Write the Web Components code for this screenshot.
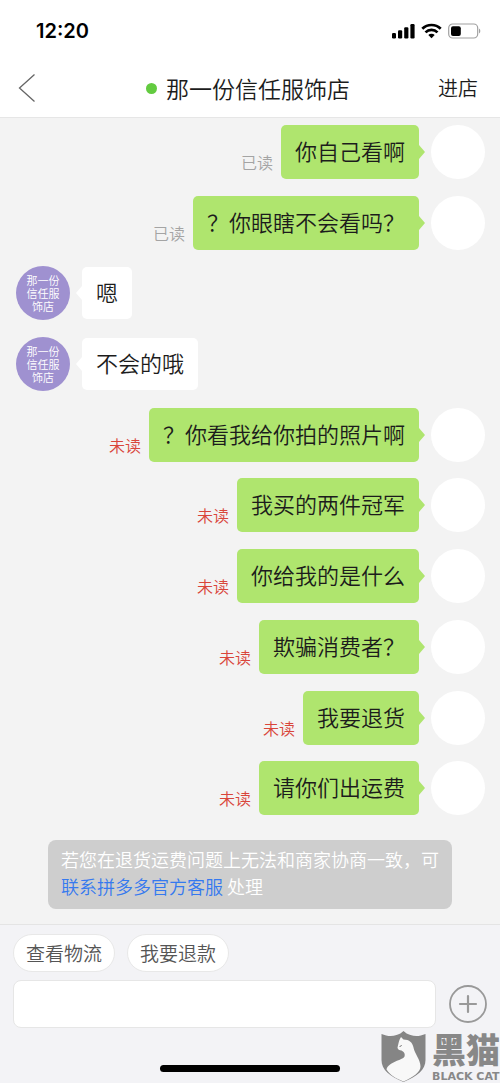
<!DOCTYPE html>
<html lang="zh-CN">
<head>
<meta charset="utf-8">
<meta name="viewport" content="width=device-width, initial-scale=1">
<title>那一份信任服饰店</title>
<style>
  body { margin: 0; background: #f3f3f3; font-family: "Noto Sans CJK SC", sans-serif; font-weight: 350; color: #1c1c1c; }
</style>
</head>
<body>
<chat-page>
  <status-bar slot="top" time="12:20"></status-bar>
  <chat-header slot="top" shop="那一份信任服饰店" action="进店"></chat-header>
  <chat-message side="out" status="已读">你自己看啊</chat-message>
  <chat-message side="out" status="已读">？你眼瞎不会看吗？</chat-message>
  <chat-message side="in" name="那一份信任服饰店">嗯</chat-message>
  <chat-message side="in" name="那一份信任服饰店">不会的哦</chat-message>
  <chat-message side="out" status="未读" unread>？你看我给你拍的照片啊</chat-message>
  <chat-message side="out" status="未读" unread>我买的两件冠军</chat-message>
  <chat-message side="out" status="未读" unread>你给我的是什么</chat-message>
  <chat-message side="out" status="未读" unread>欺骗消费者？</chat-message>
  <chat-message side="out" status="未读" unread>我要退货</chat-message>
  <chat-message side="out" status="未读" unread>请你们出运费</chat-message>
  <chat-notice>若您在退货运费问题上无法和商家协商一致，可<a href="#service">联系拼多多官方客服</a> 处理</chat-notice>
  <chat-composer slot="bottom">
    <quick-reply>查看物流</quick-reply>
    <quick-reply>我要退款</quick-reply>
  </chat-composer>
  <brand-mark slot="bottom"></brand-mark>
</chat-page>

<script>
const define = (name, html, setup) => {
  const template = document.createElement('template');
  template.innerHTML = html;
  customElements.define(name, class extends HTMLElement {
    constructor() {
      super();
      this.attachShadow({ mode: 'open' }).append(template.content.cloneNode(true));
    }
    connectedCallback() { if (setup) setup(this, this.shadowRoot); }
  });
};

define('chat-page', `
  <style>
    :host { display: flex; flex-direction: column; min-height: 100vh; position: relative; }
    main { flex: 1; display: flex; flex-direction: column; justify-content: space-between; padding: 7px 15px 15px 16px; }
  </style>
  <slot name="top"></slot>
  <main><slot></slot></main>
  <slot name="bottom"></slot>`);

define('status-bar', `
  <style>
    :host { display: flex; justify-content: space-between; align-items: center; height: 61px; padding: 0 19px 0 36px; background: #fff; color: #000; }
    time { font: 600 20px/24px Inter, sans-serif; }
    svg { display: block; }
  </style>
  <time></time>
  <svg width="90" height="16" viewBox="0 0 90 16" role="img" aria-label="信号、无线网络、电池">
    <rect x="1" y="10" width="4" height="5.500" rx="1.200"/>
    <rect x="7" y="7.200" width="4.200" height="8.300" rx="1.200"/>
    <rect x="13.200" y="4.200" width="4.200" height="11.300" rx="1.200"/>
    <rect x="19.400" y="1" width="4.200" height="14.500" rx="1.200"/>
    <g fill="none" stroke="#000" stroke-width="2.700">
      <path d="M31.300 5.800a13 13 0 0 1 18.400 0"/>
      <path d="M34.500 9.400a8.400 8.400 0 0 1 12 0"/>
    </g>
    <path d="M40.500 15.300l-3.200-3.200a4.600 4.600 0 0 1 6.400 0z"/>
    <rect x="57.700" y="1" width="29" height="14" rx="4" fill="none" stroke="#a0a0a0" stroke-width="1.200"/>
    <rect x="60" y="3.200" width="9.800" height="9.800" rx="2"/>
    <path d="M88 5.500a3 3 0 0 1 0 5z" fill="#a0a0a0"/>
  </svg>`, (el, root) => { root.querySelector('time').textContent = el.getAttribute('time'); });

define('chat-header', `
  <style>
    :host { display: grid; grid-template-columns: 1fr auto 1fr; align-items: center; height: 54px; padding: 0 22px 2px 18px; background: #fff; border-bottom: 1px solid #e6e6e6; }
    button { justify-self: start; border: 0; padding: 0; background: none; }
    svg { display: block; }
    h1 { display: flex; align-items: center; gap: 9px; margin: 0; font-size: 23px; line-height: 32px; font-weight: inherit; }
    h1::before { content: ""; width: 11px; height: 11px; border-radius: 50%; background: #63cb40; }
    a { justify-self: end; font-size: 20px; line-height: 28px; color: inherit; text-decoration: none; }
  </style>
  <button type="button" aria-label="返回"><svg width="18" height="30" viewBox="0 0 18 30" fill="none" stroke="#666" stroke-width="1.300"><path d="M16.500 1.500L1.500 15l15 13.500"/></svg></button>
  <h1></h1>
  <a href="#shop"></a>`, (el, root) => {
    root.querySelector('h1').textContent = el.getAttribute('shop');
    root.querySelector('a').textContent = el.getAttribute('action');
  });

define('chat-message', `
  <style>
    :host { display: flex; align-items: center; gap: 12px; }
    :host([side="out"]) { flex-direction: row-reverse; }
    .avatar { box-sizing: border-box; width: 54px; height: 54px; padding: 0 10px; border-radius: 50%; background: #fff; flex: none;
      display: flex; align-items: center; justify-content: center; text-align: center; font-size: 11px; line-height: 13px; color: #fff; }
    :host([side="in"]) .avatar { background: #9f91d0; }
    .bubble { position: relative; box-sizing: border-box; padding: 8px 14px 12px; border-radius: 5px; background: #fff; font-size: 22px; line-height: 32px; }
    :host([side="out"]) .bubble { padding: 9px 14px 13px; background: #afe56e; }
    .bubble::before { content: ""; position: absolute; top: 50%; right: 100%; margin-top: -7px; border: solid transparent; border-width: 7px 6px 7px 0; border-right-color: #fff; }
    :host([side="out"]) .bubble::before { right: auto; left: 100%; border-width: 7px 0 7px 6px; border-left-color: #afe56e; }
    .state { align-self: flex-end; margin: 0 -4px 5px 0; font-size: 16px; line-height: 24px; color: #a4a4a4; }
    :host([unread]) .state { color: #d9453a; }
    .state:empty { display: none; }
  </style>
  <div class="avatar"></div>
  <div class="bubble"><slot></slot></div>
  <span class="state"></span>`, (el, root) => {
    root.querySelector('.avatar').textContent = el.getAttribute('name') || '';
    root.querySelector('.state').textContent = el.getAttribute('status') || '';
  });

define('chat-notice', `
  <style>
    :host { display: block; margin: 8px 33px 0 32px; padding: 6px 12px 9px 13px; border-radius: 8px; background: #cecece; color: #fff; font-size: 18px; line-height: 27px; }
    ::slotted(a) { color: #3579ef; text-decoration: none; }
  </style>
  <slot></slot>`);

define('quick-reply', `
  <style>
    :host { display: block; }
    button { display: block; height: 38px; padding: 0 12px 1px; border: 1px solid #e8e8e8; border-radius: 19px; background: #fff; color: #555; font: inherit; font-size: 19px; line-height: 28px; }
  </style>
  <button type="button"><slot></slot></button>`);

define('chat-composer', `
  <style>
    :host { display: block; padding: 9px 13px 11px; border-top: 1px solid #e4e4e4; background: #f3f3f6; }
    .replies { display: flex; gap: 12px; margin-bottom: 8px; }
    form { display: flex; align-items: center; gap: 13px; margin: 0; }
    input { flex: 1; min-width: 0; box-sizing: border-box; height: 48px; padding: 0 12px; border: 1px solid #e6e6e6; border-radius: 8px; background: #fff; font: inherit; font-size: 20px; }
    form button { border: 0; padding: 0; background: none; }
    svg { display: block; }
    .home { width: 38%; height: 7px; margin: 37px auto 0; border-radius: 4px; background: #000; }
  </style>
  <div class="replies"><slot></slot></div>
  <form>
    <input type="text" aria-label="消息">
    <button type="button" aria-label="更多"><svg width="38" height="38" viewBox="0 0 38 38" fill="none" stroke="#999" stroke-width="1.800"><circle cx="19" cy="19" r="18"/><path d="M19 11v16M11 19h16" stroke-width="2.200" stroke-linecap="round"/></svg></button>
  </form>
  <div class="home"></div>`);

define('brand-mark', `
  <style>
    :host { position: absolute; right: 0; bottom: 0; display: flex; align-items: flex-end; gap: 6px; color: #888; }
    svg { display: block; }
    .words { display: flex; flex-direction: column; gap: 4px; }
    b { font-size: 34px; line-height: 36px; font-weight: 900; }
    small { font: 700 11px/12px "DejaVu Sans", sans-serif; }
  </style>
  <svg width="45" height="52" viewBox="0 0 44 52" aria-hidden="true">
    <path fill="#858585" d="M0 3c5 2 10 3 15 1 3-1 5-2 7-4 2 2 4 3 7 4 5 2 10 1 15-1v26c0 10-8 16-22 22C8 45 0 39 0 29z"/>
    <path fill="#f8f8f8" d="M19.500 6l2.500 2.500c6 0 9 3 10 8 1 6 7 12 7 19 0 6-8 11-17 15-8-3-14-7-17-12 2-8 16-9 18-13 1-3-1-5-3-6-2 0-4-1-4-3 1-3 1-7 3.500-10.500z"/>
    <path d="M18 15.500q2 0 2-1.500" stroke="#858585" fill="none"/>
  </svg>
  <div class="words"><b>黑猫</b><small>BLACK CAT</small></div>`);
</script>
</body>
</html>
